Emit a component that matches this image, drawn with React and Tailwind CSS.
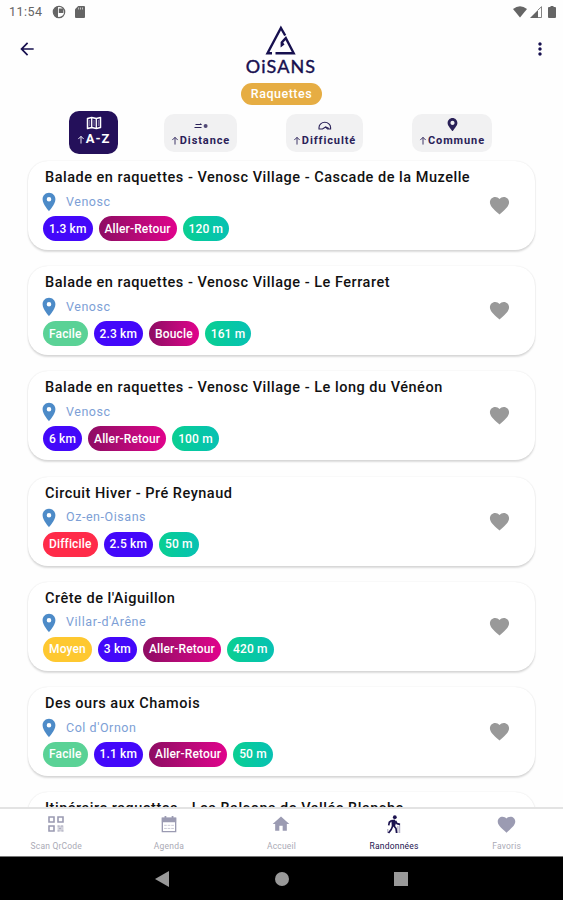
import { FaMapMarkerAlt } from 'react-icons/fa';
import { MdArrowBack, MdFavorite, MdHome, MdMoreVert, MdPlace } from 'react-icons/md';

const LEVELS = {
  Facile: 'bg-[#5ad296]',
  Moyen: 'bg-[#fec830]',
  Difficile: 'bg-[#ff2b49]',
};

const hikes = [
  { title: 'Balade en raquettes - Venosc Village - Cascade de la Muzelle', town: 'Venosc', distance: '1.3 km', kind: 'Aller-Retour', climb: '120 m' },
  { title: 'Balade en raquettes - Venosc Village - Le Ferraret', town: 'Venosc', level: 'Facile', distance: '2.3 km', kind: 'Boucle', climb: '161 m' },
  { title: 'Balade en raquettes - Venosc Village - Le long du Vénéon', town: 'Venosc', distance: '6 km', kind: 'Aller-Retour', climb: '100 m' },
  { title: 'Circuit Hiver - Pré Reynaud', town: 'Oz-en-Oisans', level: 'Difficile', distance: '2.5 km', climb: '50 m' },
  { title: "Crête de l'Aiguillon", town: "Villar-d'Arêne", level: 'Moyen', distance: '3 km', kind: 'Aller-Retour', climb: '420 m' },
  { title: 'Des ours aux Chamois', town: "Col d'Ornon", level: 'Facile', distance: '1.1 km', kind: 'Aller-Retour', climb: '50 m' },
  { title: 'Itinéraire raquettes - Les Balcons de Vallée Blanche' },
];

const QrIcon = () => (
  <svg viewBox="0 0 16 16" className="size-4" fill="none" stroke="currentColor" strokeWidth="1.6">
    <path d="M1 1h5v5H1zM10 1h5v5h-5zM1 10h5v5H1z" />
    <path d="M9.500 9.500h6v6h-6z" fill="currentColor" fillOpacity=".45" stroke="none" />
    <path d="M9.500 10h2M13 10h2M11 12.500h2M9.500 15h2M13.500 15h2" strokeWidth="1.200" strokeOpacity=".7" />
  </svg>
);

const CalendarIcon = () => (
  <svg viewBox="0 0 18 20" className="w-[16px] h-[18px]" fill="none" stroke="currentColor">
    <path d="M1.500 3.500h15v15h-15z" strokeWidth="1.5" />
    <path d="M1 3h16v5H1zM4 1h2v3H4zM12 1h2v3h-2z" fill="currentColor" stroke="none" />
    <path d="M3.500 11.500h11M3.500 15h11" strokeWidth="1" strokeOpacity=".6" strokeDasharray="3 1" />
  </svg>
);

const HikerIcon = () => (
  <svg viewBox="0 0 16 20" className="w-4 h-5" fill="none" stroke="currentColor" strokeLinejoin="round">
    <circle cx="8.800" cy="3.200" r="1.900" fill="currentColor" stroke="none" />
    <path d="M5.400 6 9 5.600l1 3.400-1 3.500H5.800z" fill="currentColor" stroke="none" />
    <path d="M5.800 6.500 3.300 8.300l-.6 3M9.500 7l1.500 2.600 3 .8M6.700 12l-1.500 3.500-2.700 3.500M8 12l2 2.500.600 4.500" strokeWidth="1.700" />
    <path d="M13.700 10v9M11.900 12v7M1.800 15v4" strokeWidth="1" strokeOpacity=".4" />
  </svg>
);

const MapIcon = () => (
  <svg viewBox="0 0 16 14" className="w-4 h-[14px]" fill="none" stroke="currentColor" strokeLinejoin="round">
    <path d="M1.500 2.500 5.700 1.500l4.600 1 4.200-1v10l-4.200 1-4.600-1-4.200 1z" strokeWidth="1.500" />
    <path d="M5.700 1.500v10M10.300 2.500v10" strokeWidth="1.300" />
    <path d="M8 4v6M3.700 4v6M12.400 4v6" strokeWidth=".8" strokeOpacity=".5" />
  </svg>
);

const DistanceIcon = () => (
  <svg viewBox="0 0 16 12" className="w-4 h-3" fill="none" stroke="currentColor">
    <path d="M2.500 5.500h6M1.500 8.500h7" strokeWidth="1.1" />
    <path d="M7 4.300 8.600 5.500" strokeWidth=".6" />
    <circle cx="12.600" cy="7" r="2" fill="currentColor" fillOpacity=".8" stroke="none" />
  </svg>
);

const GaugeIcon = () => (
  <svg viewBox="0 0 16 12" className="w-4 h-3" fill="none" stroke="currentColor" strokeWidth="1.1">
    <path d="M2 10V8.500a5.600 5 0 0 1 11.600 0V10h-3L8.600 8 5.500 10z" />
    <path d="m8.700 8 3.300 1.600" />
  </svg>
);

const Logo = () => (
  <div className="mt-px flex flex-col items-center text-[#17104f]">
    <svg viewBox="0 0 32 31" className="w-8 h-[31px]" fill="none" stroke="currentColor" strokeWidth="2.400">
      <path d="M7 28.300H2.500L15.900 3l4.300 7.500" />
      <path d="M10.500 28.300h18.200L21.800 15l-1-2-4 4.500v2.500l2-1.500" />
    </svg>
    <span className="mt-px font-['Lato'] text-[18px] leading-[18px] font-normal tracking-[1.100px] [-webkit-text-stroke:0.4px_currentColor]">OiSANS</span>
  </div>
);

const StatusBar = () => (
  <div className="flex h-6 items-center pl-[9px] pr-[7px] text-[#656565]">
    <span className="text-[12.5px] tracking-[.5px]">11:54</span>
    <svg viewBox="0 0 14 14" className="ml-[9px] w-[14px] h-[14px]">
      <circle cx="7" cy="7" r="5.700" fill="none" stroke="currentColor" strokeWidth="1.200" />
      <path d="M6 1.200v11.600A6 6 0 0 1 6 1.200z" fill="currentColor" />
      <path d="M6.800 3.500h4.600V8H6.800z" fill="currentColor" />
    </svg>
    <svg viewBox="0 0 10 12" className="ml-[9px] w-[10px] h-3" fill="currentColor">
      <path d="M3.200 0H9q1 0 1 1v10q0 1-1 1H1q-1 0-1-1V3.200z" />
      <path d="M3.600 1.500v2M5.500 1.500v2M7.500 1.500v2" stroke="white" strokeOpacity=".6" />
    </svg>
    <div className="ml-auto flex items-center gap-1">
      <svg viewBox="0 0 14 12" className="-mr-px w-[14px] h-3" fill="currentColor">
        <path d="M0 3Q7-2.500 14 3L7 11.500z" />
      </svg>
      <svg viewBox="0 0 12 12" className="w-3 h-3" fill="currentColor">
        <path d="M0 12 8 4v8z" />
        <path d="M8 4 11.500.700v10.800H8" fill="none" stroke="currentColor" strokeWidth=".8" />
      </svg>
      <svg viewBox="0 0 8 12" className="ml-0.5 w-2 h-3" fill="currentColor">
        <path d="M2.500 0h3v1H7q1 0 1 1v9q0 1-1 1H1q-1 0-1-1V2q0-1 1-1h1.500z" />
      </svg>
    </div>
  </div>
);

const SortButton = ({ icon, label, className }) => (
  <button className={`flex shrink-0 flex-col items-center rounded-[10px] ${className}`}>
    <span className="flex h-3 items-center">{icon}</span>
    <span className="mt-[3px] flex items-center whitespace-nowrap font-bold leading-[14px]">
      <svg viewBox="0 0 8 10" className="mr-px w-2 h-[9px]" fill="none" stroke="currentColor">
        <path d="M4 9.500V1.500M1 4.500l3-3 3 3" />
      </svg>
      {label}
    </span>
  </button>
);

const Pill = ({ className, children }) => (
  <span className={`flex h-[25px] items-center justify-center rounded-full px-[6px] text-[12px] font-medium tracking-[.14px] text-white ${className}`}>
    {children}
  </span>
);

const HikeCard = ({ hike }) => (
  <div className="flex h-[89px] shrink-0 items-start justify-between rounded-[20px] bg-white pl-[15px] pr-6 shadow-[0_1.5px_2px_rgba(0,0,0,0.14),0_0_2px_rgba(0,0,0,0.07)]">
    <div>
      <h2 className="mt-[8px] pl-[2px] whitespace-nowrap text-[14.5px] leading-[18px] font-medium tracking-[.51px] text-[#111]">{hike.title}</h2>
      {hike.town && (
        <>
          <div className="mt-1 flex h-[22px] items-center text-[#4d8bc8]">
            <MdPlace className="-ml-[5px] size-[22px]" />
            <span className="ml-[6px] text-[12.5px] tracking-[.55px] text-[#7d9fd6]">{hike.town}</span>
          </div>
          <div className="mt-[3px] flex gap-[6px]">
            {hike.level && <Pill className={LEVELS[hike.level]}>{hike.level}</Pill>}
            <Pill className="bg-[#4308fa]">{hike.distance}</Pill>
            {hike.kind && <Pill className="bg-linear-to-r from-[#8e0c63] to-[#e0028c]">{hike.kind}</Pill>}
            <Pill className="bg-linear-to-r from-[#0bcf91] to-[#08c1b3]">{hike.climb}</Pill>
          </div>
        </>
      )}
    </div>
    <MdFavorite className="mt-[33px] size-[23px] text-[#999]" />
  </div>
);

const tabs = [
  { label: 'Scan QrCode', icon: <QrIcon /> },
  { label: 'Agenda', icon: <CalendarIcon /> },
  { label: 'Accueil', icon: <MdHome className="size-5" /> },
  { label: 'Randonnées', icon: <HikerIcon />, active: true },
  { label: 'Favoris', icon: <MdFavorite className="size-[21px]" /> },
];

export default function App() {
  return (
    <div className="flex h-[900px] w-[563px] flex-col overflow-hidden bg-[#fefefe] font-['Roboto',sans-serif]">
      <StatusBar />
      <header className="grid h-[53px] grid-cols-[1fr_auto_1fr] items-start pl-[17px] pr-[18px] text-[#17104f]">
        <MdArrowBack className="mt-[15px] size-5" />
        <Logo />
        <MdMoreVert className="mt-[15px] -mr-[5px] size-5 justify-self-end" />
      </header>
      <div className="mt-[6px] flex justify-center">
        <span className="flex h-[22px] w-[81px] items-center justify-center rounded-full bg-[#e6ad43] text-[12.5px] font-medium tracking-[.5px] text-white">Raquettes</span>
      </div>
      <div className="mt-[6px] flex h-[43px] items-center pl-[69px] text-[11px] tracking-[.9px] text-[#2a2158]">
        <SortButton icon={<MapIcon />} label="A-Z" className="h-[43px] w-[49px] bg-[#24105a] pt-[6px] text-[13px] text-white" />
        <SortButton icon={<DistanceIcon />} label="Distance" className="ml-[46px] h-[38px] w-[73px] bg-[#f1f1f2] pt-[5px]" />
        <SortButton icon={<GaugeIcon />} label="Difficulté" className="ml-[49px] h-[38px] w-[77px] bg-[#f1f1f2] pt-[5px]" />
        <SortButton icon={<FaMapMarkerAlt className="size-[13px]" />} label="Commune" className="ml-[49px] h-[38px] w-[80px] bg-[#f1f1f2] pt-[5px]" />
      </div>
      <main className="flex min-h-0 flex-1 flex-col gap-[16.2px] overflow-hidden px-7 pt-[7px]">
        {hikes.map((hike) => <HikeCard key={hike.title} hike={hike} />)}
      </main>
      <nav className="grid h-[49px] shrink-0 grid-cols-5 border-t-2 border-[#e3e3e3] bg-white">
        {tabs.map((tab) => (
          <div key={tab.label} className={`flex flex-col items-center pt-[5px] ${tab.active ? 'text-[#1b124f]' : 'text-[#9b9bb2]'}`}>
            <span className="flex h-5 items-center">{tab.icon}</span>
            <span className={`mt-[7px] text-[8.5px] leading-[11px] tracking-[.2px] ${tab.active ? '' : 'text-[#aaaab5]'}`}>{tab.label}</span>
          </div>
        ))}
      </nav>
      <div className="grid h-11 shrink-0 grid-cols-[105px_120px_120px_120px] items-center justify-items-center border-t border-[#777] bg-black text-[#999]">
        <svg viewBox="0 0 14 16" className="col-start-2 w-[14px] h-4 -translate-x-[3px]" fill="currentColor"><path d="M0 8 14 0v16z" /></svg>
        <span className="size-[14px] rounded-full bg-[#999] -translate-x-[3px]" />
        <span className="size-[14px] bg-[#999] -translate-x-[4px]" />
      </div>
    </div>
  );
}
